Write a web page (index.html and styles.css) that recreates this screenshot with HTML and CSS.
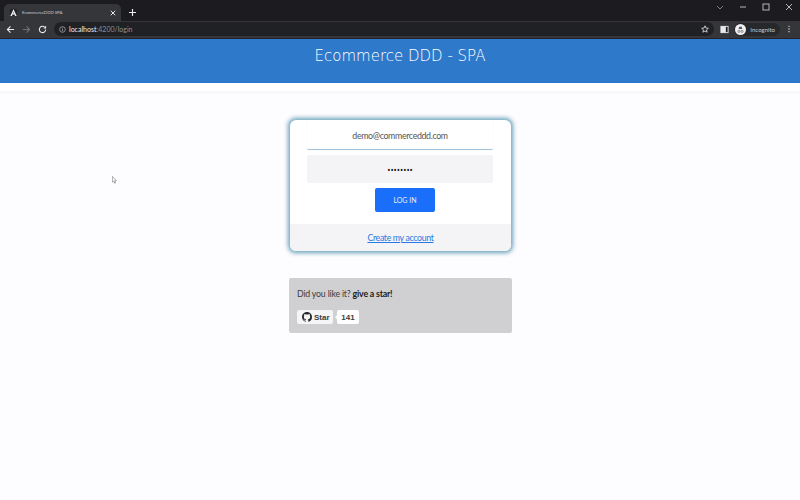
FILE: index.html
```html
<!DOCTYPE html>
<html lang="en">
  <head>
    <meta charset="UTF-8" />
    <title>EcommerceDDD SPA</title>
    <link rel="stylesheet" href="styles.css">
  </head>
  <body>
    <div class="tabstrip">
      <div class="tab">
        <svg class="favicon" viewBox="0 0 10 10"><path d="M5 .5L1 2l.6 5.400L5 9.500l3.400-2.100L9 2z" fill="#202124"/><path d="M5 1L1.500 9h1.800l.7-1.800h2L6.700 9h1.800zM4.500 5.800L5 4.300l.5 1.500z" fill="#eceded"/></svg>
        <span class="tab-title">EcommerceDDD SPA</span>
        <svg class="tab-close" viewBox="0 0 8 8"><path d="M1 1l6 6M7 1L1 7" stroke="#e8eaed" stroke-width="1.300"/></svg>
      </div>
      <svg class="new-tab" viewBox="0 0 8 8"><path d="M4 0v8M0 4h8" stroke="#e8eaed" stroke-width="1.300"/></svg>
      <div class="win-controls">
        <svg viewBox="0 0 10 10"><path d="M2 4l3 3 3-3" fill="none" stroke="#7c7e82"/></svg>
        <svg viewBox="0 0 10 10"><path d="M2 5h6" stroke="#b5b6b9"/></svg>
        <svg viewBox="0 0 10 10"><rect x="2" y="2" width="6" height="6" fill="none" stroke="#b5b6b9"/></svg>
        <svg viewBox="0 0 10 10"><path d="M2 2l6 6M8 2l-6 6" stroke="#b5b6b9"/></svg>
      </div>
    </div>
    <div class="toolbar">
      <svg class="nav-icon" viewBox="0 0 10 10"><path d="M9 5H1.500M5 1.500L1.500 5 5 8.500" fill="none" stroke="#e8eaed" stroke-width="1.200"/></svg>
      <svg class="nav-icon" viewBox="0 0 10 10"><path d="M1 5h7.500M5 1.500L8.500 5 5 8.500" fill="none" stroke="#6f7175" stroke-width="1.200"/></svg>
      <svg class="nav-icon" viewBox="0 0 10 10"><path d="M8.500 5A3.500 3.500 0 1 1 7.400 2.400" fill="none" stroke="#e8eaed" stroke-width="1.200"/><path d="M9 .8V4H5.800z" fill="#e8eaed"/></svg>
      <div class="omnibox">
        <svg class="info-icon" viewBox="0 0 10 10"><circle cx="5" cy="5" r="4" fill="none" stroke="#b5b6b9"/><path d="M5 4.500v3M5 2.500v1" stroke="#b5b6b9"/></svg>
        <span class="url-host">localhost</span><span class="url-path">:4200/login</span>
        <svg class="star-icon" viewBox="0 0 10 10"><path d="M5 1l1.200 2.800 3 .3-2.300 2 .7 2.900L5 7.500 2.400 9l.7-2.900-2.300-2 3-.3z" fill="none" stroke="#e8eaed"/></svg>
      </div>
      <svg class="panel-icon" viewBox="0 0 10 10"><rect x="1" y="1.500" width="8" height="7" fill="#202124" stroke="#e8eaed"/><rect x="1" y="1.500" width="5.500" height="7" fill="#e8eaed"/></svg>
      <div class="profile">
        <svg class="avatar" viewBox="0 0 12 12"><circle cx="6" cy="6" r="6" fill="#f1f1f2"/><path d="M2.500 6h7M4 5.500l.6-2.500h2.800l.6 2.500z" fill="#55575b"/><circle cx="4.300" cy="8" r="1.200" fill="none" stroke="#55575b" stroke-width=".7"/><circle cx="7.700" cy="8" r="1.200" fill="none" stroke="#55575b" stroke-width=".7"/></svg>
        <span>Incognito</span>
      </div>
      <svg class="menu-icon" viewBox="0 0 4 12"><circle cx="2" cy="2" r="1" fill="#e8eaed"/><circle cx="2" cy="6" r="1" fill="#e8eaed"/><circle cx="2" cy="10" r="1" fill="#e8eaed"/></svg>
    </div>

    <div class="page">
      <header class="header">
        <h1>Ecommerce DDD - SPA</h1>
      </header>
      <div class="header-gap"></div>
      <main class="content">
        <form class="login-card">
          <div class="fields">
            <input class="field field-email" type="text" value="demo@commerceddd.com" />
            <input class="field field-pass" type="password" value="12345678" />
            <button class="btn" type="button">LOG IN</button>
          </div>
          <div class="card-footer">
            <a href="#">Create my account</a>
          </div>
        </form>
        <div class="star-box">
          <p>Did you like it? <b>give a star!</b></p>
          <div class="gh-row">
            <span class="gh-btn">
              <svg viewBox="0 0 16 16"><path d="M8 0C3.580 0 0 3.580 0 8c0 3.540 2.290 6.530 5.470 7.590.4.070.55-.17.55-.38 0-.19-.01-.82-.01-1.490-2.010.37-2.530-.49-2.690-.94-.09-.23-.48-.94-.82-1.130-.28-.15-.68-.52-.01-.53.63-.01 1.080.58 1.230.82.720 1.210 1.870.870 2.330.660.070-.520.280-.870.510-1.070-1.780-.2-3.640-.890-3.640-3.950 0-.870.310-1.590.820-2.150-.080-.2-.360-1.020.080-2.120 0 0 .670-.210 2.200.820.640-.180 1.320-.270 2-.270s1.360.090 2 .270c1.530-1.040 2.200-.820 2.200-.820.440 1.100.160 1.920.080 2.120.510.560.820 1.270.820 2.150 0 3.070-1.870 3.750-3.650 3.950.290.250.540.730.540 1.480 0 1.070-.010 1.930-.010 2.200 0 .210.150.460.550.380A8.010 8.010 0 0 0 16 8c0-4.420-3.580-8-8-8z" fill="#24292f"/></svg>
              Star
            </span>
            <span class="gh-count">141</span>
          </div>
        </div>
      </main>
      <svg class="cursor" viewBox="0 0 7 11"><path d="M.5.500v8l2-1.500 1.200 3 1.300-.5-1.200-3H6z" fill="#fff" stroke="#6d6d70" stroke-width=".8"/></svg>
    </div>
  </body>
</html>
```

FILE: styles.css
```css
* {
  box-sizing: border-box;
}
html,
body {
  height: 100%;
}
body {
  margin: 0;
  overflow: hidden;
  display: flex;
  flex-direction: column;
  font-family: Lato, "Open Sans", sans-serif;
  background: #fdfcfe;
}

/* browser chrome */
.tabstrip {
  height: 21px;
  flex: none;
  display: flex;
  align-items: flex-end;
  padding-left: 4px;
  background: #1c1c20;
}
.tab {
  width: 117px;
  height: 17px;
  display: flex;
  align-items: center;
  padding: 0 5px;
  background: #35363a;
  border-radius: 5px 5px 0 0;
}
.favicon {
  width: 9px;
  height: 9px;
  flex: none;
}
.tab-title {
  flex: 1;
  margin-left: 4px;
  font-size: 4.300px;
  color: #c9cacc;
  white-space: nowrap;
}
.tab-close {
  width: 6px;
  height: 6px;
  flex: none;
}
.new-tab {
  width: 7px;
  height: 7px;
  margin: 0 0 5px 8px;
}
.win-controls {
  margin-left: auto;
  height: 100%;
  display: flex;
  align-items: center;
  gap: 13px;
  padding: 0 6px 7px 0;
}
.win-controls svg {
  width: 10px;
  height: 10px;
}
.toolbar {
  height: 18px;
  flex: none;
  display: flex;
  align-items: center;
  padding: 0 0 1px 6px;
  background: #35363a;
  border-bottom: 1px solid #222327;
}
.nav-icon {
  width: 9px;
  height: 9px;
  margin-right: 7px;
  flex: none;
}
.omnibox {
  flex: 1;
  height: 14px;
  display: flex;
  align-items: center;
  padding: 0 5px 0 5px;
  border-radius: 7px;
  background: #202124;
  font-size: 7px;
}
.info-icon {
  width: 7px;
  height: 7px;
  margin-right: 3px;
}
.url-host {
  color: #e8eaed;
}
.url-path {
  color: #8e9094;
}
.star-icon {
  width: 8px;
  height: 8px;
  margin-left: auto;
}
.panel-icon {
  width: 9px;
  height: 9px;
  margin: 0 5px 0 6px;
}
.profile {
  height: 13px;
  display: flex;
  align-items: center;
  gap: 4px;
  padding: 0 5px 0 1px;
  border-radius: 7px;
  background: #27282b;
  font-size: 6px;
  color: #c9cacc;
}
.avatar {
  width: 11px;
  height: 11px;
}
.menu-icon {
  width: 4px;
  height: 8px;
  margin: 0 9px 0 7px;
}

/* app */
.page {
  flex: 1;
  position: relative;
}
.header {
  height: 44px;
  padding-top: 7px;
  background: #2e79c9;
  border-bottom: 1px solid #2a75cf;
  text-align: center;
}
.header h1 {
  margin: 0;
  font-family: "DejaVu Sans", sans-serif;
  font-size: 15px;
  font-weight: 200;
  line-height: 20px;
  color: #fff;
}
.header-gap {
  height: 8px;
  background: #fff;
  box-shadow: 0 2px 3px rgba(0, 0, 0, .03);
}
.content {
  width: 223px;
  margin: 29px auto 0 289px;
}
.login-card {
  width: 221px;
  margin-left: 1px;
  border-radius: 6px;
  overflow: hidden;
  background: #fff;
  box-shadow: 0 0 4px 1.500px rgba(60, 135, 165, .75);
}
.fields {
  height: 104px;
  padding: 0 17px;
  display: flex;
  flex-direction: column;
}
.field {
  width: 186px;
  padding: 0;
  border: none;
  outline: none;
  border-radius: 2px;
  text-align: center;
  font-family: inherit;
  font-size: 8.800px;
  letter-spacing: -.35px;
  color: #555;
}
.field-email {
  height: 30px;
  padding-top: 1px;
  background: #fff;
  border-bottom: 1px solid #9fc4dc;
  box-shadow: 0 0 2px rgba(0, 0, 0, .06);
}
.field-pass {
  height: 28px;
  margin-top: 5px;
  background: #f4f3f5;
  font-family: "Open Sans", sans-serif;
  font-size: 8.500px;
  letter-spacing: 0;
  color: #111;
}
.btn {
  width: 60px;
  height: 24px;
  margin: 5px 0 0 68px;
  border: none;
  border-radius: 2px;
  background: #1a6ffa;
  color: #e6effc;
  font-family: inherit;
  font-size: 7px;
}
.card-footer {
  height: 27px;
  display: flex;
  align-items: center;
  justify-content: center;
  background: #f4f3f5;
  font-size: 8.800px;
  letter-spacing: -.35px;
}
.card-footer a {
  color: #2a78e4;
}
.star-box {
  height: 55px;
  margin-top: 27px;
  padding: 9px 8px 0;
  border-radius: 2px;
  background: #d0cfd1;
  font-size: 8.800px;
  letter-spacing: -.2px;
  color: #3d3d3f;
}
.star-box p {
  margin: 0;
  line-height: 13px;
}
.star-box b {
  color: #1b1b1d;
}
.gh-row {
  display: flex;
  margin-top: 10px;
  gap: 4px;
  letter-spacing: 0;
}
.gh-btn,
.gh-count {
  height: 14px;
  display: flex;
  align-items: center;
  border-radius: 2px;
  background: #f5f5f6;
  font-family: "Liberation Sans", sans-serif;
  font-size: 8px;
  font-weight: 700;
  color: #3a3d42;
}
.gh-btn {
  width: 36px;
  padding-left: 5px;
  gap: 2px;
}
.gh-btn svg {
  width: 10px;
  height: 10px;
}
.gh-count {
  position: relative;
  width: 22px;
  justify-content: center;
  background: #fff;
}
.gh-count::before {
  content: "";
  position: absolute;
  left: -2px;
  top: 5px;
  border-style: solid;
  border-width: 2px 2px 2px 0;
  border-color: transparent #fff transparent transparent;
}
.cursor {
  position: absolute;
  left: 112px;
  top: 137px;
  width: 5px;
  height: 8px;
}
```
